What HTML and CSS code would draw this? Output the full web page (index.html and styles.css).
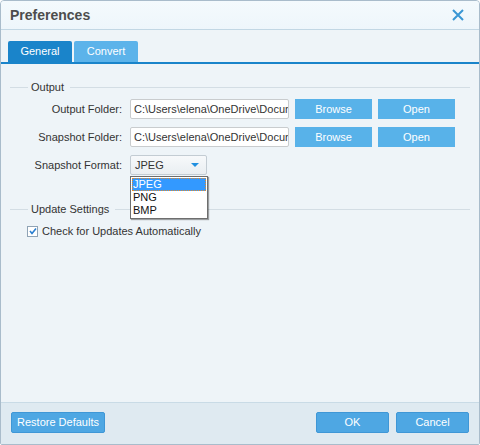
FILE: index.html
```html
<!DOCTYPE html>
<html>
<head>
    <title>Preferences</title>
    <link rel="stylesheet" href="styles.css">
</head>
<body>
    <div class="window">
        <div class="titlebar">
            <span class="title">Preferences</span>
            <svg class="close" width="12" height="12" viewBox="0 0 12 12">
                <path d="M1 1 L11 11 M11 1 L1 11" stroke="#3a97d4" stroke-width="2"/>
            </svg>
        </div>
        <div class="tabs">
            <div class="tab active">General</div>
            <div class="tab">Convert</div>
        </div>
        <div class="content">
            <div class="group-title"><span>Output</span></div>
            <div class="fields">
                <label>Output Folder:</label>
                <div class="input"><span>C:\Users\elena\OneDrive\Documents</span></div>
                <div class="btn">Browse</div>
                <div class="btn">Open</div>

                <label>Snapshot Folder:</label>
                <div class="input"><span>C:\Users\elena\OneDrive\Documents</span></div>
                <div class="btn">Browse</div>
                <div class="btn">Open</div>

                <label>Snapshot Format:</label>
                <div class="select-wrap">
                    <div class="select">JPEG<span class="arrow"></span></div>
                    <div class="dropdown">
                        <div class="option selected">JPEG</div>
                        <div class="option">PNG</div>
                        <div class="option">BMP</div>
                    </div>
                </div>
            </div>
            <div class="group-title update"><span>Update Settings</span></div>
            <div class="check-row">
                <span class="checkbox">
                    <svg width="8" height="8" viewBox="0 0 8 8"><path d="M1 4 L3 6.5 L7 1.5" stroke="#2b7fd0" stroke-width="1.6" fill="none"/></svg>
                </span>
                Check for Updates Automatically
            </div>
        </div>
        <div class="footer">
            <div class="fbtn restore">Restore Defaults</div>
            <div class="right">
                <div class="fbtn">OK</div>
                <div class="fbtn">Cancel</div>
            </div>
        </div>
    </div>
</body>
</html>
```

FILE: styles.css
```css
body {
    margin: 0;
    font-family: "Liberation Sans", Arial, sans-serif;
    font-size: 11px;
    color: #333;
}

.window {
    width: 480px;
    height: 445px;
    box-sizing: border-box;
    border: 1px solid #a9bccb;
    border-radius: 4px 4px 2px 2px;
    display: flex;
    flex-direction: column;
    background-color: #eef4f8;
    overflow: hidden;
}

.titlebar {
    height: 28px;
    flex-shrink: 0;
    display: flex;
    align-items: center;
    justify-content: space-between;
    padding: 0 15px 0 9px;
    background: linear-gradient(#f4fafd, #eef6fb);
    border-bottom: 1px solid #c2d7e4;
}

.title {
    font-size: 14px;
    font-weight: bold;
    color: #4d4d4d;
}

.tabs {
    display: flex;
    gap: 2px;
    padding: 11px 0 0 7px;
    border-bottom: 2px solid #1a84ca;
}

.tab {
    width: 64px;
    height: 21px;
    line-height: 21px;
    text-align: center;
    color: #fff;
    background-color: #5cb3ea;
    border-radius: 2px 2px 0 0;
}

.tab.active {
    background-color: #1a84ca;
}

.content {
    flex: 1;
    padding: 16px 9px 0 9px;
    position: relative;
}

.group-title {
    display: flex;
    align-items: center;
    height: 14px;
    color: #333;
}

.group-title::before {
    content: "";
    width: 18px;
    border-top: 1px solid #d3dde4;
    margin-right: 3px;
}

.group-title::after {
    content: "";
    flex: 1;
    border-top: 1px solid #d3dde4;
    margin-left: 6px;
}

.fields {
    display: grid;
    grid-template-columns: 113px 160px 77px 77px;
    grid-auto-rows: 20px;
    column-gap: 6px;
    row-gap: 8px;
    margin-top: 5px;
}

.fields label {
    text-align: right;
    line-height: 20px;
    margin-right: 1px;
}

.input {
    background-color: #fff;
    border: 1px solid #c9ccce;
    border-radius: 2px;
    padding: 0 3px;
    line-height: 18px;
    white-space: nowrap;
    overflow: hidden;
    margin-left: 1px;
}

.btn {
    background-color: #58b2e9;
    color: #fff;
    text-align: center;
    line-height: 20px;
}

.select-wrap {
    position: relative;
    grid-column: 2;
    width: 77px;
    margin-left: 1px;
}

.select {
    height: 18px;
    line-height: 18px;
    padding: 0 4px;
    border: 1px solid #c3ccd3;
    border-radius: 2px;
    background: linear-gradient(#f7f9fb, #e9eef2);
    position: relative;
}

.arrow {
    position: absolute;
    right: 7px;
    top: 7px;
    border-left: 4px solid transparent;
    border-right: 4px solid transparent;
    border-top: 4px solid #1f8fe0;
}

.dropdown {
    position: absolute;
    top: 21px;
    left: 0;
    width: 74px;
    background-color: #fff;
    border: 1px solid #6e6e6e;
    box-shadow: 1px 1px 1px rgba(0, 0, 0, 0.35);
    padding: 1px;
    z-index: 2;
}

.option {
    height: 13px;
    line-height: 13px;
    padding-left: 1px;
    color: #111;
}

.option.selected {
    background-color: #3399ff;
    color: #fff;
    outline: 1px dotted #e08a2c;
    outline-offset: -1px;
}

.group-title.update {
    margin-top: 27px;
}

.check-row {
    display: flex;
    align-items: center;
    margin: 9px 0 0 17px;
    gap: 4px;
}

.checkbox {
    width: 9px;
    height: 9px;
    border: 1px solid #8fa3b5;
    background-color: #fff;
    display: flex;
    align-items: center;
    justify-content: center;
}

.footer {
    height: 42px;
    flex-shrink: 0;
    box-sizing: border-box;
    border-top: 1px solid #c9dbe6;
    background-color: #dfeaf1;
    display: flex;
    align-items: flex-start;
    justify-content: space-between;
    padding: 9px 10px 0 10px;
}

.right {
    display: flex;
    gap: 7px;
}

.fbtn {
    width: 71px;
    height: 19px;
    line-height: 19px;
    text-align: center;
    color: #fff;
    background-color: #4ea7e3;
    border: 1px solid #3f97d6;
    border-radius: 2px;
}

.fbtn.restore {
    width: 92px;
}
```
